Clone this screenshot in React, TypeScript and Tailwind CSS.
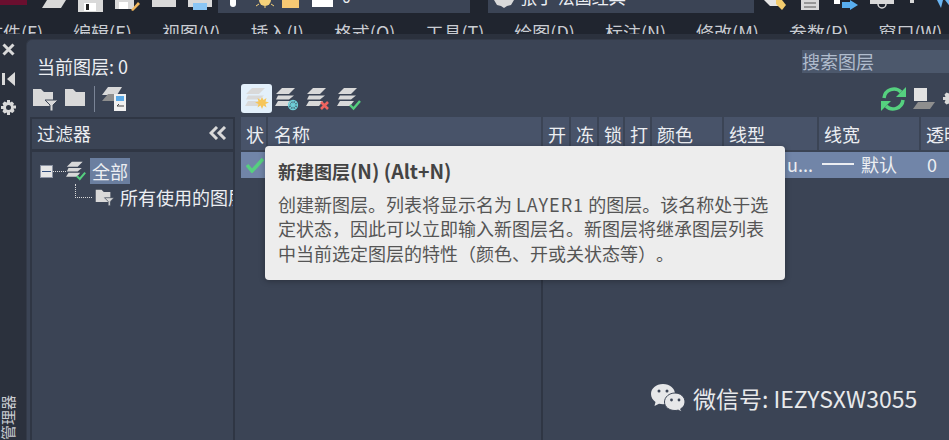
import React from 'react'

const menus = ['文件(F)', '编辑(E)', '视图(V)', '插入(I)', '格式(O)', '工具(T)', '绘图(D)', '标注(N)', '修改(M)', '参数(P)', '窗口(W)']

const columns = [
  { label: '开', width: 'w-[26px]' },
  { label: '冻', width: 'w-[26px]' },
  { label: '锁', width: 'w-[24px]' },
  { label: '打', width: 'w-[25px]' },
  { label: '颜色', width: 'w-[70px]' },
  { label: '线型', width: 'w-[93px]' },
  { label: '线宽', width: 'w-[100px]' },
  { label: '透明', width: 'w-[40px]' },
]

function Folder({ filter = false, width = 26, height = 24 }: { filter?: boolean; width?: number; height?: number }) {
  return (
    <svg width={width} height={height} viewBox="0 0 26 24">
      <path d="M1 2h8l3 3h9v14H1z" fill="#d9d9d9" />
      {filter && <path d="M13 13h13l-5 5v6h-3v-6z" fill="#d9d9d9" stroke="#3b4455" strokeWidth="1" />}
    </svg>
  )
}

function Layers({ badge, size = 24 }: { badge?: string; size?: number }) {
  return (
    <svg width={size} height={size} viewBox="0 0 24 24">
      <path d="M7 1h13l-6 6H1z" fill="#d9d9d9" />
      <path d="M3 8.500h16l-5 4H1z" fill="#d9d9d9" />
      <path d="M3 14h14l-4 5H0z" fill="#d9d9d9" />
      {badge === 'new' && <path d="M17 10l1.500 3 3-2-1 3.500 3.500 1-3.500 1.500 1 3.500-3-2-1.500 3.500-1.500-3.500-3 2 1-3.500-3.500-1.500 3.500-1-1-3.500 3 2z" fill="#f6c65b" />}
      {badge === 'web' && (
        <g fill="none" stroke="#6fd0d8" strokeWidth="1.300">
          <circle cx="18" cy="18" r="4.500" />
          <path d="M13.500 18h9M18 13.500v9M15 15l6 6M21 15l-6 6" />
        </g>
      )}
      {badge === 'del' && <path d="M15 15l7 7M22 15l-7 7" stroke="#f0645f" strokeWidth="2.600" />}
      {badge === 'ok' && <path d="M13 18l3.500 3.500L23 14" fill="none" stroke="#55d07f" strokeWidth="2.400" />}
    </svg>
  )
}

function WeChat() {
  return (
    <svg width="36" height="30" viewBox="0 0 36 30">
      <path d="M13 1C6 1 1 5.500 1 11c0 3.200 1.700 6 4.500 8L4.500 23l4.500-2.300c1.200.3 2.500.5 4 .5 7 0 12-4.700 12-10.200S20 1 13 1z" fill="#e6e7e9" />
      <circle cx="9" cy="8" r="1.500" fill="#3b4455" />
      <circle cx="17" cy="8" r="1.500" fill="#3b4455" />
      <path d="M25 10c-5.800 0-10.500 4-10.500 9s4.700 8.500 10.500 8.500c1.100 0 2.200-.2 3.200-.4l3.300 2-.8-3.300c2.700-1.600 4.300-4 4.300-6.800 0-5-4.200-9-10-9z" fill="#e6e7e9" stroke="#3b4455" strokeWidth="1" />
      <circle cx="21.500" cy="17" r="1.400" fill="#3b4455" />
      <circle cx="29" cy="17" r="1.400" fill="#3b4455" />
    </svg>
  )
}

export default function App() {
  return (
    <div className="w-[949px] h-[440px] overflow-hidden relative flex flex-col bg-[#2b313d] text-[#eceef2] text-[18px] leading-[24px] font-['Noto_Sans_CJK_SC','Noto_Sans',sans-serif]">
      {/* clipped quick access bar */}
      <div className="h-[13px] shrink-0 bg-[#20252f] flex overflow-hidden [&>*]:shrink-0">
        <div className="w-[27px] h-[5px] bg-[#6a0f2f]" />
        <svg className="ml-[15px]" width="24" height="8" viewBox="0 0 24 8"><path d="M5 0h19l-5 8H0z" fill="#d9d9d9" /></svg>
        <svg className="ml-[12px]" width="25" height="12" viewBox="0 0 25 12"><path d="M0 0h25v12H0z" fill="#d9d9d9" /><path d="M6 3h12v8H6z" fill="#fff" /><path d="M8 4h3v6H8z" fill="#222" /></svg>
        <svg className="ml-[12px]" width="25" height="12" viewBox="0 0 25 12"><path d="M0 0h19v9H0z" fill="#d9d9d9" /><path d="M4 2h9v7H4z" fill="#fff" /><path d="M16 10l7-8 2 2-7 7z" fill="#f2b75c" /></svg>
        <div className="ml-[12px] w-[24px] h-[7px] bg-[#d9d9d9]" />
        <svg className="ml-[12px]" width="24" height="10" viewBox="0 0 24 10"><path d="M0 0h24v7H0z" fill="#d9d9d9" /><path d="M5 3h14v7H5z" fill="#8ac6f5" /></svg>
        <div className="ml-[6px] w-[252px] bg-[#3b4455] flex">
          <div className="ml-[12px] w-[6px] h-[7px] bg-white rounded-b-[3px]" />
          <svg className="ml-[18px]" width="22" height="8" viewBox="0 0 22 8"><circle cx="11" cy="0" r="6" fill="#f6d27a" /><path d="M2 6l3-2M20 6l-3-2M11 6v2" stroke="#f6d27a" /></svg>
          <div className="ml-[6px] w-[17px] h-[8px] bg-[#f6c873]" />
          <div className="ml-[13px] w-[21px] h-[7px] bg-white" />
          <span className="ml-[9px] mt-[-16px] text-[16px]">0</span>
        </div>
        <div className="ml-[18px] w-[266px] bg-[#3b4455] flex">
          <svg className="ml-[6px]" width="20" height="8" viewBox="0 0 20 8"><path d="M0 0h20l-3 5-4 1-3 2-3-2-4-1z" fill="#d9d9d9" /></svg>
          <span className="ml-[6px] mt-[-15px] text-[17px] whitespace-nowrap">张丁  法国经典</span>
        </div>
        <svg className="ml-[10px]" width="22" height="10" viewBox="0 0 22 10"><path d="M0 0h14l2 6H6z" fill="#e5e5e5" /><path d="M12 0h6l4 5-4 5-6-6z" fill="#f4cd6e" /></svg>
        <svg className="ml-[15px]" width="18" height="10" viewBox="0 0 18 10"><path d="M0 0h18v10H0z" fill="#d9d9d9" /><path d="M3 3h12M3 7h12" stroke="#555" /></svg>
        <svg className="ml-[15px]" width="24" height="10" viewBox="0 0 24 10"><path d="M0 0h6v4H0z" fill="#fff" /><path d="M8 2h8V0l8 5-8 5V8H8z" fill="#58aef0" /></svg>
        <svg className="ml-[12px]" width="24" height="10" viewBox="0 0 24 10"><path d="M0 0h24v4H0z" fill="#d9d9d9" /><circle cx="12" cy="4" r="4" fill="none" stroke="#d9d9d9" strokeWidth="1.500" /></svg>
        <div className="ml-[16px] w-[4px] h-[3px] bg-[#d9d9d9]" />
        <svg className="ml-[23px]" width="14" height="8" viewBox="0 0 14 8"><path d="M0 0h6l-2 8zM8 0h6v8z" fill="#6ab5f2" /></svg>
      </div>

      {/* menu bar, cut by the palette */}
      <div className="h-[21px] shrink-0 bg-[#20252f] overflow-hidden flex gap-[30px] ml-[-15px] pt-[7px] whitespace-nowrap text-[#c9ccd2]">
        {menus.map((m) => (
          <span key={m}>{m}</span>
        ))}
      </div>
      <div className="h-[5px] shrink-0 bg-[#2b313d]" />

      <div className="flex-1 flex min-h-0">
        {/* palette title strip */}
        <div className="w-[26px] shrink-0 flex flex-col items-start">
          <svg className="mt-[4px] ml-[2px]" width="13" height="13" viewBox="0 0 13 13"><path d="M1.500 1.500l10 10M11.500 1.500l-10 10" stroke="#d9d9d9" strokeWidth="3" /></svg>
          <svg className="mt-[16px] ml-[2px]" width="13" height="14" viewBox="0 0 13 14"><path d="M0 1h3v12H0z M13 0v14L5 7z" fill="#d9d9d9" /></svg>
          <svg className="mt-[14px] ml-[1px]" width="15" height="15" viewBox="0 0 15 15"><path d="M6 0h3v2.500l2-1 2 2-1 2H15v3h-2.500l1 2.500-2 2-2.500-1V15H6v-2.500l-2.500 1-2-2 1-2.500H0V6h2.500l-1-2.500 2-2L6 2.500z" fill="#d9d9d9" /><circle cx="7.500" cy="7.500" r="2.500" fill="#2b313d" /></svg>
          <span className="mt-auto [writing-mode:vertical-rl] [text-orientation:sideways] rotate-180 text-[15px] leading-[16px] text-[#c9ccd2] whitespace-nowrap">管理器</span>
        </div>

        {/* layer palette */}
        <div className="flex-1 min-w-0 bg-[#3b4455] rounded-tl-[6px] border-t-[1px] border-l-[1px] border-[#333a48] flex flex-col">
          <div className="h-[43px] shrink-0 flex justify-between">
            <div className="ml-[10px] mt-[14px]">当前图层: 0</div>
            <div className="mt-[10px] w-[147px] h-[23px] bg-[#4c586c] text-[#b0bccd] leading-[23px]">搜索图层</div>
          </div>

          <div className="h-[31px] mb-[3px] shrink-0 flex items-center [&>*]:shrink-0">
            <div className="ml-[5px]"><Folder filter /></div>
            <div className="ml-[6px]"><Folder /></div>
            <div className="ml-[4px] w-[1px] h-[26px] bg-[#7a8496]" />
            <svg className="ml-[7px]" width="25" height="24" viewBox="0 0 25 24">
              <path d="M6 0h14l-5 8H0z" fill="#d9d9d9" />
              <path d="M6 7h10v7H0z" fill="#8e8e8e" />
              <path d="M12 7h12v17H12z" fill="#f0f0f0" />
              <path d="M14 9h8v5h-8z" fill="#5aa9e6" />
              <path d="M15 19h7M15 19l2-2" stroke="#444" />
            </svg>
            <div className="ml-[114px] w-[31px] h-[29px] rounded-[3px] bg-[#e3f0fb] flex items-center justify-center"><Layers badge="new" /></div>
            <div className="ml-[3px]"><Layers badge="web" /></div>
            <div className="ml-[7px]"><Layers badge="del" /></div>
            <div className="ml-[7px]"><Layers badge="ok" /></div>
            <svg className="ml-[520px]" width="25" height="24" viewBox="0 0 25 24" fill="none" stroke="#55d07f" strokeWidth="3.500">
              <path d="M3 11a10 10 0 0 1 17-6" />
              <path d="M22 13a10 10 0 0 1-17 6" />
              <path d="M25 0v10h-10z" fill="#55d07f" stroke="none" />
              <path d="M0 24v-10h10z" fill="#55d07f" stroke="none" />
            </svg>
            <svg className="ml-[7px]" width="22" height="22" viewBox="0 0 22 22"><path d="M5 14h17l-5 7H0z" fill="#8e8e8e" /><path d="M1 0h13v13H1z" fill="#e2e2e2" /></svg>
            <svg className="ml-[8px]" width="15" height="15" viewBox="0 0 15 15"><path d="M6 0h3v2.500l2-1 2 2-1 2H15v3h-2.500l1 2.500-2 2-2.500-1V15H6v-2.500l-2.500 1-2-2 1-2.500H0V6h2.500l-1-2.500 2-2L6 2.500z" fill="#d9d9d9" /></svg>
          </div>

          <div className="flex-1 min-h-0 flex">
            {/* filter tree */}
            <div className="w-[205px] shrink-0 ml-[3px] border-x-[2px] border-t-[2px] border-[#2f3644] flex flex-col overflow-hidden">
              <div className="h-[33px] shrink-0 border-b-[3px] border-[#2f3644] flex items-center justify-between pl-[5px] pr-[6px] pb-[2px]">
                <span>过滤器</span>
                <svg width="18" height="14" viewBox="0 0 18 14" fill="none" stroke="#d9d9d9" strokeWidth="3"><path d="M8 1L2 7l6 6M16 1l-6 6 6 6" /></svg>
              </div>
              <div className="pt-[6px] flex items-center h-[32px] shrink-0 [&>*]:shrink-0">
                <div className="ml-[8px] w-[13px] h-[13px] bg-[#e6e6e6] border border-[#8b93a3] flex items-center justify-center">
                  <div className="w-[9px] h-[1px] bg-[#33507f]" />
                </div>
                <div className="w-[13px] border-t border-dotted border-[#d9d9d9]" />
                <Layers badge="ok" size={20} />
                <span className="ml-[4px] px-[2px] w-[40px] h-[26px] bg-[#6b7fa0] leading-[26px]">全部</span>
              </div>
              <div className="flex items-start h-[32px] shrink-0 whitespace-nowrap [&>*]:shrink-0">
                <div className="ml-[43px] w-[17px] h-[14px] border-l border-b border-dotted border-[#d9d9d9]" />
                <div className="ml-[3px] mt-[4px]"><Folder filter width={19} height={18} /></div>
                <span className="ml-[6px] mt-[1px]">所有使用的图层</span>
              </div>
            </div>

            <div className="w-[6px] shrink-0" />

            {/* layer table */}
            <div className="flex-1 min-w-0 flex flex-col overflow-hidden">
              <div className="h-[33px] shrink-0 flex gap-[2px] whitespace-nowrap">
                <div className="w-[25px] shrink-0 bg-[#485369] pl-[5px] leading-[34px]">状</div>
                <div className="w-[273px] shrink-0 bg-[#485369] pl-[6px] leading-[34px]">名称</div>
                {columns.map((c) => (
                  <div key={c.label} className={`${c.width} shrink-0 bg-[#485369] pl-[5px] leading-[34px] overflow-hidden`}>
                    {c.label}
                  </div>
                ))}
              </div>
              <div className="flex-1 min-h-0 flex pt-[2px]">
                <div className="w-[302px] shrink-0 border-r-[2px] border-[#2f3644] -mt-[2px] pt-[2px]">
                  <div className="h-[26px] bg-[#7185a8] flex items-center pl-[5px]">
                    <svg width="18" height="16" viewBox="0 0 18 16" fill="none" stroke="#55d07f" strokeWidth="3.500"><path d="M1 8l5 6L17 2" /></svg>
                  </div>
                </div>
                <div className="flex-1 min-w-0">
                  <div className="h-[26px] bg-[#7185a8] flex items-center whitespace-nowrap pb-[3px]">
                    <span className="ml-[244px]">u...</span>
                    <div className="ml-[9px] w-[32px] h-[2px] bg-[#eceef2]" />
                    <span className="ml-[7px]">默认</span>
                    <span className="ml-[30px]">0</span>
                  </div>
                </div>
              </div>
            </div>
          </div>
        </div>
      </div>

      {/* tooltip over the table */}
      <div className="absolute left-[265px] top-[146px] w-[520px] h-[134px] rounded-[4px] bg-[#ededed] shadow-[0_1px_6px_rgba(0,0,0,0.3)] pl-[13px] pt-[13px] text-[#555] text-[18px] leading-[24.500px] whitespace-nowrap [text-spacing-trim:space-all]">
        <div className="font-bold text-[#444] mb-[8px]">新建图层<span className="text-[19.500px]">(N) (Alt+N)</span></div>
        <div>创建新图层。列表将显示名为 <span className="tracking-[1px]">LAYER1</span> 的图层。该名称处于选</div>
        <div>定状态，因此可以立即输入新图层名。新图层将继承图层列表</div>
        <div>中当前选定图层的特性（颜色、开或关状态等）。</div>
      </div>

      {/* watermark */}
      <div className="absolute left-[650px] top-[383px] flex items-center gap-[7px] text-[23px] leading-[30px] text-[#e8e9eb] whitespace-nowrap">
        <WeChat />
        <span>微信号: IEZYSXW3055</span>
      </div>
    </div>
  )
}
